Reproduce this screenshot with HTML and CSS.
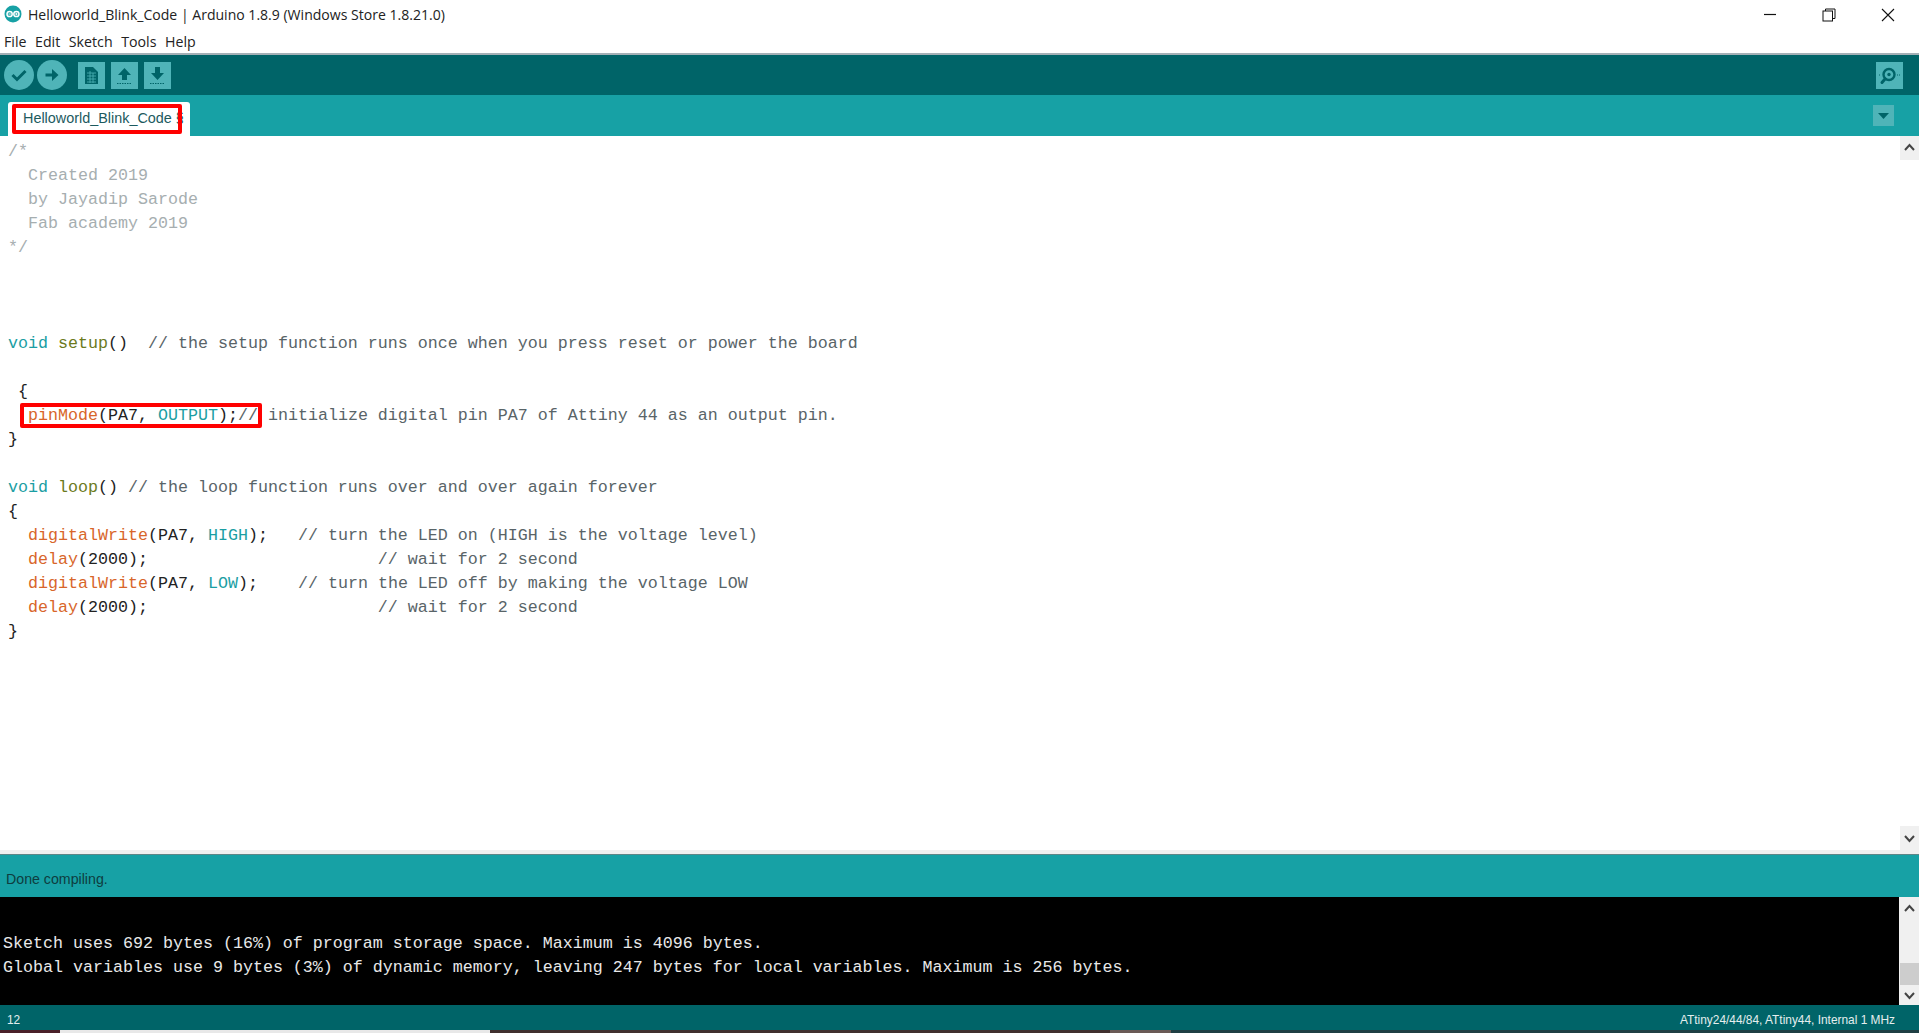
FILE: index.html
```html
<!DOCTYPE html>
<html lang="en">
<head>
<meta charset="utf-8">
<title>Helloworld_Blink_Code | Arduino 1.8.9</title>
<link rel="stylesheet" href="styles.css">
</head>
<body>
<div class="app">
  <header class="titlebar">
    <svg class="logo" width="18" height="18" viewBox="0 0 18 18"><circle cx="9" cy="9" r="8.5" fill="#17a1a5"/><g fill="none" stroke="#fff" stroke-width="1.5"><circle cx="5.6" cy="9" r="2.6"/><circle cx="12.4" cy="9" r="2.6"/></g><path d="M4.4 9h2.4M11.2 9h2.4M12.4 7.8v2.4" stroke="#fff" stroke-width=".9"/></svg>
    <span class="title">Helloworld_Blink_Code | Arduino 1.8.9 (Windows Store 1.8.21.0)</span>
    <div class="winctl">
      <svg width="14" height="14" viewBox="0 0 14 14"><path d="M1 6.5h12" stroke="#111" stroke-width="1.2"/></svg>
      <svg width="14" height="14" viewBox="0 0 14 14"><path d="M3.5 3V1h9.500v9.500h-2.500" fill="none" stroke="#111"/><rect x="1" y="3" width="9.500" height="10" fill="#fff" stroke="#111"/></svg>
      <svg width="14" height="14" viewBox="0 0 14 14"><path d="M1 1l12 12M13 1L1 13" stroke="#111" stroke-width="1.1"/></svg>
    </div>
  </header>
  <nav class="menubar"><span>File</span><span>Edit</span><span>Sketch</span><span>Tools</span><span>Help</span></nav>
  <div class="toolbar">
    <svg class="round" width="30" height="30" viewBox="0 0 30 30"><circle cx="15" cy="15" r="15" fill="#4fb4b8"/><path d="M8.500 15l4.500 4.500 8.500-8.500" fill="none" stroke="#006468" stroke-width="3"/></svg>
    <svg class="round" width="30" height="30" viewBox="0 0 30 30"><circle cx="15" cy="15" r="15" fill="#4fb4b8"/><path d="M8.500 13.500h6.500v-4.500l6.500 6-6.500 6v-4.500h-6.500z" fill="#006468"/></svg>
    <svg class="square first" width="27" height="27" viewBox="0 0 27 27"><rect width="27" height="27" fill="#4fb4b8"/><path d="M7 5h8l5 5v12H7z" fill="#006468"/><path d="M9 11h9M9 14h9M9 17h9M9 20h9M12 9v12M15 11v10" stroke="#4fb4b8" stroke-width=".8"/></svg>
    <svg class="square" width="27" height="27" viewBox="0 0 27 27"><rect width="27" height="27" fill="#4fb4b8"/><path d="M13.500 6l6.500 7h-4v5h-5v-5H7z" fill="#006468"/><path d="M6 21.500h15" stroke="#006468" stroke-width="1.200" stroke-dasharray="1.500 1"/></svg>
    <svg class="square" width="27" height="27" viewBox="0 0 27 27"><rect width="27" height="27" fill="#4fb4b8"/><path d="M13.500 18L7 11h4V5h5v6h4z" fill="#006468"/><path d="M6 21.500h15" stroke="#006468" stroke-width="1.200" stroke-dasharray="1.500 1"/></svg>
    <svg class="square serial" width="27" height="27" viewBox="0 0 27 27"><rect width="27" height="27" fill="#4fb4b8"/><circle cx="13" cy="12.500" r="5.500" fill="none" stroke="#006468" stroke-width="2.400"/><circle cx="13" cy="12.500" r="1.700" fill="#006468"/><path d="M9 17l-3 3.500" stroke="#006468" stroke-width="3" stroke-linecap="round"/><path d="M3 13h2M21 13h3" stroke="#006468" stroke-dasharray="1 1"/></svg>
  </div>
  <div class="tabbar">
    <div class="tab">Helloworld_Blink_Code §<span class="mark tabmark"></span></div>
    <svg class="tabmenu" width="21" height="21" viewBox="0 0 21 21"><rect width="21" height="21" fill="#4fb4b8"/><path d="M5 8h11l-5.500 6z" fill="#006468"/></svg>
  </div>
  <main class="editor">
    <div class="code">
      <div class="ln cm">/*</div>
      <div class="ln cm">  Created 2019</div>
      <div class="ln cm">  by Jayadip Sarode</div>
      <div class="ln cm">  Fab academy 2019</div>
      <div class="ln cm">*/</div>
      <div class="ln"> </div>
      <div class="ln"> </div>
      <div class="ln"> </div>
      <div class="ln"><span class="kw">void</span> <span class="fn">setup</span>()  <span class="lc">// the setup function runs once when you press reset or power the board</span></div>
      <div class="ln"> </div>
      <div class="ln"> {</div>
      <div class="ln">  <span class="call">pinMode</span>(PA7, <span class="kw">OUTPUT</span>);<span class="lc">// initialize digital pin PA7 of Attiny 44 as an output pin.</span><span class="mark codemark"></span></div>
      <div class="ln">}</div>
      <div class="ln"> </div>
      <div class="ln"><span class="kw">void</span> <span class="fn">loop</span>() <span class="lc">// the loop function runs over and over again forever</span></div>
      <div class="ln">{</div>
      <div class="ln">  <span class="call">digitalWrite</span>(PA7, <span class="kw">HIGH</span>);   <span class="lc">// turn the LED on (HIGH is the voltage level)</span></div>
      <div class="ln">  <span class="call">delay</span>(2000);                       <span class="lc">// wait for 2 second</span></div>
      <div class="ln">  <span class="call">digitalWrite</span>(PA7, <span class="kw">LOW</span>);    <span class="lc">// turn the LED off by making the voltage LOW</span></div>
      <div class="ln">  <span class="call">delay</span>(2000);                       <span class="lc">// wait for 2 second</span></div>
      <div class="ln">}</div>
    </div>
    <div class="scroll light">
      <svg class="arrow" width="19" height="24" viewBox="0 0 19 24"><path d="M5 14l4.500-5 4.500 5" fill="none" stroke="#444" stroke-width="2"/></svg>
      <svg class="arrow" width="19" height="24" viewBox="0 0 19 24"><path d="M5 10l4.500 5 4.500-5" fill="none" stroke="#444" stroke-width="2"/></svg>
    </div>
  </main>
  <div class="divider"></div>
  <div class="status">Done compiling.</div>
  <section class="console">
    <div class="output">
      <div class="ln"> </div>
      <div class="ln">Sketch uses 692 bytes (16%) of program storage space. Maximum is 4096 bytes.</div>
      <div class="ln">Global variables use 9 bytes (3%) of dynamic memory, leaving 247 bytes for local variables. Maximum is 256 bytes.</div>
    </div>
    <div class="scroll grey">
      <svg class="arrow" width="19" height="24" viewBox="0 0 19 24"><path d="M5 14l4.500-5 4.500 5" fill="none" stroke="#444" stroke-width="2"/></svg>
      <div class="track"><div class="thumb"></div></div>
      <svg class="arrow" width="19" height="20" viewBox="0 0 19 20"><path d="M5 8l4.500 5 4.500-5" fill="none" stroke="#444" stroke-width="2"/></svg>
    </div>
  </section>
  <footer class="footer"><span>12</span><span class="board">ATtiny24/44/84, ATtiny44, Internal 1 MHz</span></footer>
  <div class="taskbar"><i class="t1"></i><i class="t2"></i><i class="t3"></i><i class="t4"></i><i class="t5"></i></div>
</div>
</body>
</html>
```
FILE: styles.css
```css
* { box-sizing: border-box; }
html, body { margin: 0; height: 100%; overflow: hidden; background: #fff; }
.app { height: 1033px; display: flex; flex-direction: column; font-family: "Open Sans", "Liberation Sans", sans-serif; color: #111; }

.titlebar { height: 27px; flex: none; display: flex; align-items: center; padding: 2px 0 0 4px; }
.logo { flex: none; margin: -2px 6px 0 0; }
.title { font-size: 14.05px; color: #222; }
.winctl { margin-left: auto; display: flex; gap: 45px; padding-right: 24px; }

.menubar { height: 28px; flex: none; display: flex; align-items: center; gap: 8.6px; padding: 2px 0 0 4px; font-size: 14.2px; color: #222; border-bottom: 2px solid #a4b0b6; }

.toolbar { height: 40px; flex: none; background: #006468; display: flex; align-items: center; padding: 0 16px 0 4px; gap: 3px; }
.round { flex: none; }
.square { flex: none; margin-right: 3px; }
.square.first { margin-left: 8px; }
.square.serial { margin-left: auto; margin-right: 0; }

.tabbar { height: 41px; flex: none; background: #17a1a5; display: flex; align-items: flex-end; justify-content: space-between; padding: 0 25px 0 8px; }
.tab { position: relative; width: 182px; height: 34px; background: #fff; border-radius: 3px 3px 0 0; padding: 7px 0 0 15px; font: 14.4px/18px "Liberation Sans", sans-serif; color: #1c5a5e; white-space: nowrap; overflow: hidden; }
.tabmenu { align-self: flex-start; margin-top: 10px; }
.mark { position: absolute; border: 4px solid #f00; border-radius: 2px; pointer-events: none; }
.tabmark { left: 4px; top: 2px; width: 170px; height: 30px; }

.editor { flex: 1; min-height: 0; display: flex; background: #fff; }
.code { flex: 1; padding: 4px 0 0 8px; font: 16.67px/24px "Liberation Mono", monospace; color: #222; }
.ln { height: 24px; white-space: pre; position: relative; }
.cm { color: #a6aeb0; }
.lc { color: #596468; }
.kw { color: #1a9ea3; }
.fn { color: #6b7a1c; }
.call { color: #d8662a; }
.codemark { left: 12px; top: -1px; width: 242px; height: 25px; }

.scroll { width: 20px; flex: none; display: flex; flex-direction: column; justify-content: space-between; }
.arrow { display: block; background: #f0f0f0; margin-left: 1px; }

.divider { height: 4px; flex: none; background: #f0f0f0; }
.status { height: 43px; flex: none; background: #17a1a5; border-top: 1px solid #5f8688; padding: 14px 0 0 6px; font: 14.2px/20px "Liberation Sans", sans-serif; color: #0e3d40; }

.console { height: 108px; flex: none; background: #000; display: flex; }
.output { flex: 1; padding: 11px 0 0 3px; font: 16.67px/24px "Liberation Mono", monospace; color: #e8e8e8; }
.scroll.grey { background: #f0f0f0; }
.track { flex: 1; display: flex; flex-direction: column; justify-content: flex-end; }
.thumb { height: 22px; background: #cdcdcd; margin-left: 1px; }

.footer { height: 25px; flex: none; background: #006468; display: flex; justify-content: space-between; align-items: center; padding: 5px 24px 0 7px; font: 11.9px "Liberation Sans", sans-serif; color: #e4eeee; }

.taskbar { height: 3px; flex: none; display: flex; }
.taskbar i { display: block; height: 3px; }
.t1 { width: 60px; background: #4a2029; }
.t2 { width: 430px; background: #e8e8e8; }
.t3 { width: 620px; background: #40302e; }
.t4 { width: 61px; background: #6a5a56; }
.t5 { flex: 1; background: #1f3f44; }
```
